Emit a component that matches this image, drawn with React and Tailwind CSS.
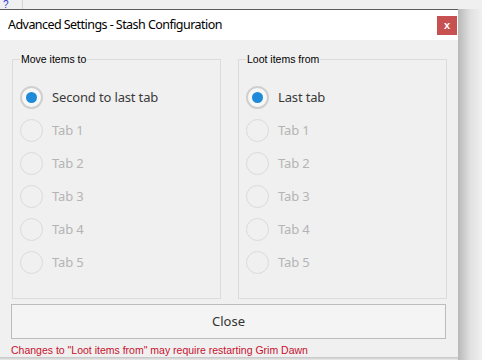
import React from 'react';

const tabs = ['Tab 1', 'Tab 2', 'Tab 3', 'Tab 4', 'Tab 5'];

const Radio = ({ checked, disabled, label }) => (
  <div className="flex items-center h-[33px]">
    <div
      className={
        checked
          ? 'w-[23px] h-[23px] rounded-full border-2 border-[#cfcfcf] bg-[#f7f7f7] flex items-center justify-center'
          : 'w-[23px] h-[23px] rounded-full border-[1.5px] border-[#dadada]'
      }
    >
      {checked && <div className="w-[11px] h-[11px] rounded-full bg-[#1f8ad8]" />}
    </div>
    <span
      className={
        'ml-[9px] text-[13px] leading-none tracking-[-0.15px] ' +
        (disabled ? 'text-[#b4b4b4]' : 'text-[#3a3a3a]')
      }
    >
      {label}
    </span>
  </div>
);

const Group = ({ title, first }) => (
  <fieldset className="w-[209px] h-[247px] border border-[#dcdcdc] rounded-none px-0 m-0">
    <legend className="ml-[7px] px-[1px] text-[10.5px] leading-[14px] text-black font-['Liberation_Sans',sans-serif]">
      {title}
    </legend>
    <div className="pl-[7px] pt-[15px] flex flex-col">
      <Radio checked label={first} />
      {tabs.map((t) => (
        <Radio key={t} disabled label={t} />
      ))}
    </div>
  </fieldset>
);

export default function App() {
  return (
    <div className="w-[482px] h-[360px] bg-[#f0f0f0] overflow-hidden flex flex-col font-['Noto_Sans',sans-serif]">
      {/* window behind */}
      <div className="h-[9px] flex shrink-0">
        <span className="w-[23px] pl-[3px] text-[10px] leading-[9px] text-[#2a3ad8] font-['Liberation_Sans',sans-serif] overflow-hidden border-r border-[#d4d4d4]">
          ?
        </span>
      </div>
      <div className="flex">
        <div className="flex flex-col shrink-0">
          <div className="w-[458px] h-[348px] border-t border-[#5c5c5c] bg-[#f0f0f0] flex flex-col">
            <div className="h-[30px] bg-white flex items-center justify-between pl-[8px] pr-[1px]">
              <span className="text-[12.5px] tracking-[-0.55px] text-black">
                Advanced Settings - Stash Configuration
              </span>
              <button className="w-[20px] h-[19px] bg-[#c75050] text-white text-[11px] font-bold leading-none flex items-center justify-center font-['Liberation_Sans',sans-serif]">
                x
              </button>
            </div>
            <div className="flex flex-col px-[11px] pt-[12px]">
              <div className="flex gap-[17px] pl-[1px]">
                <Group title="Move items to" first="Second to last tab" />
                <Group title="Loot items from" first="Last tab" />
              </div>
              <button className="mt-[5px] w-[435px] h-[35px] border border-[#bcbcbc] bg-[#f4f4f4] text-[13px] text-[#333]">
                Close
              </button>
              <p className="mt-[4px] text-[10.5px] leading-[14px] text-[#c8102e] font-['Liberation_Sans',sans-serif]">
                Changes to "Loot items from" may require restarting Grim Dawn
              </p>
            </div>
          </div>
          <div className="h-[3px] bg-gradient-to-b from-[#c4c4c4] to-[#eaeaea]" />
        </div>
        <div className="w-[24px] h-[351px] bg-gradient-to-r from-[#b8b8b8] via-[#e0e0e0] to-[#f0f0f0]" />
      </div>
    </div>
  );
}
